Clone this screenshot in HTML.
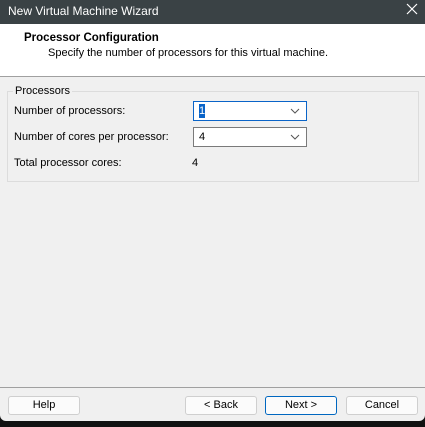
<!DOCTYPE html><html><head><style>
body{margin:0;width:425px;height:427px;background:#111;font-family:"Liberation Sans",sans-serif;font-size:11px;color:#000;position:relative;overflow:hidden}
.a{position:absolute}
.title{left:0;top:0;width:425px;height:24px;background:#3a4245;color:#fff;font-size:12px}
.body{left:0;top:24px;width:425px;height:397px;background:#f0f0f0;border-radius:0 0 6px 6px}
.hdr{left:0;top:24px;width:425px;height:52px;background:#fff;border-bottom:1px solid #a0a0a0}
.grp{left:7px;top:91px;width:410px;height:89px;border:1px solid #dcdcdc}
.cb{width:112px;height:18px;border:1px solid #7a7a7a;background:#fff}
.btn{top:396px;width:70px;height:17px;border:1px solid #cfcfcf;border-radius:3px;background:#fbfbfb;text-align:center;line-height:17px;font-size:11px}
.chev{position:absolute;right:6px;top:5px}
</style></head><body>
<div class="a title"><span class="a" style="left:8px;top:4px">New Virtual Machine Wizard</span>
<svg class="a" style="left:406px;top:3px" width="12" height="12"><path d="M1 1L11 11M11 1L1 11" stroke="#fff" stroke-width="1.2"/></svg></div>
<div class="a body"></div>
<div class="a hdr"></div>
<div class="a" style="left:24px;top:32px;font-weight:bold;font-size:11.5px">Processor Configuration</div>
<div class="a" style="left:48px;top:47px">Specify the number of processors for this virtual machine.</div>
<div class="a grp"></div>
<div class="a" style="left:13px;top:85px;background:#f0f0f0;padding:0 2px">Processors</div>
<div class="a" style="left:14px;top:105px">Number of processors:</div>
<div class="a" style="left:14px;top:131px">Number of cores per processor:</div>
<div class="a" style="left:14px;top:157px">Total processor cores:</div>
<div class="a" style="left:192px;top:157px">4</div>
<div class="a cb" style="left:193px;top:101px;border-color:#0a64c8"><span class="a" style="left:5px;top:2px;background:#0a64c8;color:#fff;width:6px;height:14px;line-height:14px">1</span><svg class="chev" width="10" height="8"><path d="M1 2L5 6L9 2" stroke="#555" fill="none"/></svg></div>
<div class="a cb" style="left:193px;top:127px"><span class="a" style="left:5px;top:3px">4</span><svg class="chev" width="10" height="8"><path d="M1 2L5 6L9 2" stroke="#555" fill="none"/></svg></div>
<div class="a" style="left:0;top:387px;width:425px;height:1px;background:#a0a0a0"></div>
<div class="a btn" style="left:8px">Help</div>
<div class="a btn" style="left:185px">&lt; Back</div>
<div class="a btn" style="left:265px;border-color:#0067c0">Next &gt;</div>
<div class="a btn" style="left:346px">Cancel</div>
</body></html>
